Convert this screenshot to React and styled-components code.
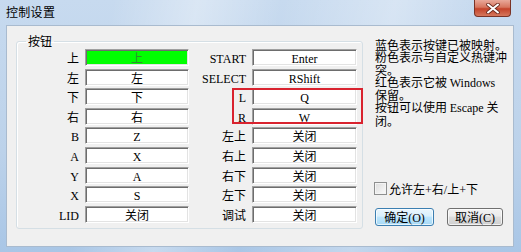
import React from 'react';
import styled, { createGlobalStyle } from 'styled-components';

const GlobalStyle = createGlobalStyle`
  html, body {
    margin: 0;
    padding: 0;
    overflow: hidden;
  }
  body {
    font-family: "Noto Sans CJK SC", sans-serif;
    font-size: 12px;
    color: #000;
  }
`;

const Frame = styled.div`
  width: 521px;
  height: 252px;
  box-sizing: border-box;
  display: flex;
  flex-direction: column;
  background:
    linear-gradient(100deg, rgba(255,255,255,0) 20%, rgba(255,255,255,0.35) 35%, rgba(255,255,255,0) 50%, rgba(255,255,255,0.3) 70%, rgba(255,255,255,0) 85%),
    linear-gradient(180deg, #c7daef 0%, #bcd2ea 60%, #a9c6e6 100%);
`;

const TitleBar = styled.div`
  height: 25px;
  display: flex;
  align-items: flex-start;
`;

const Title = styled.div`
  padding-left: 6px;
  line-height: 24px;
  font-size: 12px;
  letter-spacing: 0.3px;
`;

const CloseButton = styled.div`
  margin-left: auto;
  margin-right: 10px;
  width: 37px;
  height: 17px;
  box-sizing: border-box;
  border: 1px solid #7a3326;
  border-top: none;
  border-radius: 0 0 4px 4px;
  background: linear-gradient(180deg, #e9a99a 0%, #d7765f 45%, #c4432a 55%, #d5775c 100%);
  display: flex;
  align-items: center;
  justify-content: center;
`;

const Client = styled.div`
  flex: 1;
  margin: 0 7px 5px 6px;
  background: #f0f0f0;
  border: 1px solid #a9bbcf;
  display: flex;
  align-items: flex-start;
`;

const GroupBox = styled.fieldset`
  margin: 9px 0 0 9px;
  padding: 2px 5px 5px 0;
  border: 1px solid #d5dfe5;
  border-radius: 3px;
  box-shadow: inset 1px 1px 0 #fff;
  min-width: 0;
`;

const Legend = styled.legend`
  margin-left: 9px;
  padding: 0 2px;
  font-size: 12px;
  line-height: 12px;
`;

const Grid = styled.div`
  position: relative;
  display: grid;
  grid-template-columns: 62px 104px 51px 105px;
  grid-auto-rows: 17px;
  column-gap: 6px;
  row-gap: 2.6px;
`;

const Label = styled.div`
  text-align: right;
  line-height: 17px;
  white-space: nowrap;
`;

const Field = styled.div`
  box-sizing: border-box;
  height: 17px;
  border: 1px solid;
  border-color: #a0a0a0 #fff #fff #a0a0a0;
  box-shadow: inset 1px 1px 0 #6d6d6d, inset -1px -1px 0 #e3e3e3;
  background: ${props => props.bg || '#fff'};
  color: ${props => props.fg || '#000'};
  text-align: center;
  line-height: 15px;
  white-space: nowrap;
`;

const Latin = styled.span`
  font-family: "Liberation Serif", serif;
  font-size: 12px;
`;

const Highlight = styled.div`
  position: absolute;
  left: 215px;
  top: 39px;
  width: 131px;
  height: 36px;
  box-sizing: border-box;
  border: 2px solid #d9232f;
  pointer-events: none;
`;

const SidePanel = styled.div`
  margin-left: 12px;
  padding-top: 13px;
  display: flex;
  flex-direction: column;
`;

const InfoLine = styled.div`
  line-height: 12.3px;
  white-space: nowrap;
`;

const CheckRow = styled.div`
  margin-top: 55px;
  margin-left: -1px;
  display: flex;
  align-items: center;
  height: 13px;
  gap: 2px;
`;

const CheckBox = styled.span`
  width: 13px;
  height: 13px;
  box-sizing: border-box;
  border: 1px solid #8e8f8f;
  background: linear-gradient(135deg, #dcdcdc, #fbfbfb);
  box-shadow: inset 0 0 0 1px #f4f4f4;
`;

const ButtonRow = styled.div`
  margin-top: 13px;
  display: flex;
  gap: 13px;
`;

const Button = styled.div`
  width: ${props => props.w}px;
  height: 18px;
  box-sizing: border-box;
  border: 1px solid ${props => (props.primary ? '#3c7fb1' : '#707070')};
  border-radius: 3px;
  background: ${props =>
    props.primary
      ? 'linear-gradient(180deg, #eaf6fd 0%, #d9f0fc 45%, #bee6fd 50%, #a7d9f5 100%)'
      : 'linear-gradient(180deg, #f2f2f2 0%, #ebebeb 45%, #dddddd 50%, #cfcfcf 100%)'};
  box-shadow: inset 0 0 0 1px rgba(255, 255, 255, 0.7);
  text-align: center;
  line-height: 16px;
  white-space: nowrap;
`;

const leftRows = [
  { label: '上', value: '上', green: true },
  { label: '左', value: '左' },
  { label: '下', value: '下' },
  { label: '右', value: '右' },
  { label: 'B', value: 'Z', latin: true },
  { label: 'A', value: 'X', latin: true },
  { label: 'Y', value: 'A', latin: true },
  { label: 'X', value: 'S', latin: true },
  { label: 'LID', value: '关闭', latinLabel: true },
];

const rightRows = [
  { label: 'START', value: 'Enter', latin: true },
  { label: 'SELECT', value: 'RShift', latin: true },
  { label: 'L', value: 'Q', latin: true },
  { label: 'R', value: 'W', latin: true },
  { label: '左上', value: '关闭' },
  { label: '右上', value: '关闭' },
  { label: '右下', value: '关闭' },
  { label: '左下', value: '关闭' },
  { label: '调试', value: '关闭' },
];

const Cell = ({ row }) => (
  <>
    <Label>{row.latin || row.latinLabel ? <Latin>{row.label}</Latin> : row.label}</Label>
    <Field bg={row.green ? '#00ff00' : undefined} fg={row.green ? '#2f8f2f' : undefined}>
      {row.latin ? <Latin>{row.value}</Latin> : row.value}
    </Field>
  </>
);

const CloseIcon = () => (
  <svg width="14" height="11" viewBox="0 0 14 11">
    <path d="M2 1.5 L12 9.5 M12 1.5 L2 9.5" stroke="#6b2a1e" strokeWidth="3.6" strokeLinecap="round" />
    <path d="M2 1.5 L12 9.5 M12 1.5 L2 9.5" stroke="#fff" strokeWidth="2" strokeLinecap="round" />
  </svg>
);

export default function App() {
  return (
    <>
      <GlobalStyle />
      <Frame>
        <TitleBar>
          <Title>控制设置</Title>
          <CloseButton>
            <CloseIcon />
          </CloseButton>
        </TitleBar>
        <Client>
          <GroupBox>
            <Legend>按钮</Legend>
            <Grid>
              {leftRows.map((row, i) => (
                <React.Fragment key={i}>
                  <Cell row={row} />
                  <Cell row={rightRows[i]} />
                </React.Fragment>
              ))}
              <Highlight />
            </Grid>
          </GroupBox>
          <SidePanel>
            <InfoLine>蓝色表示按键已被映射。</InfoLine>
            <InfoLine>粉色表示与自定义热键冲</InfoLine>
            <InfoLine>突。</InfoLine>
            <InfoLine>红色表示它被 <Latin>Windows</Latin></InfoLine>
            <InfoLine>保留。</InfoLine>
            <InfoLine>按钮可以使用 <Latin>Escape</Latin> 关</InfoLine>
            <InfoLine>闭。</InfoLine>
            <CheckRow>
              <CheckBox />
              <span>允许左<Latin>+</Latin>右<Latin>/</Latin>上<Latin>+</Latin>下</span>
            </CheckRow>
            <ButtonRow>
              <Button primary w={59}>确定<Latin>(O)</Latin></Button>
              <Button w={56}>取消<Latin>(C)</Latin></Button>
            </ButtonRow>
          </SidePanel>
        </Client>
      </Frame>
    </>
  );
}
